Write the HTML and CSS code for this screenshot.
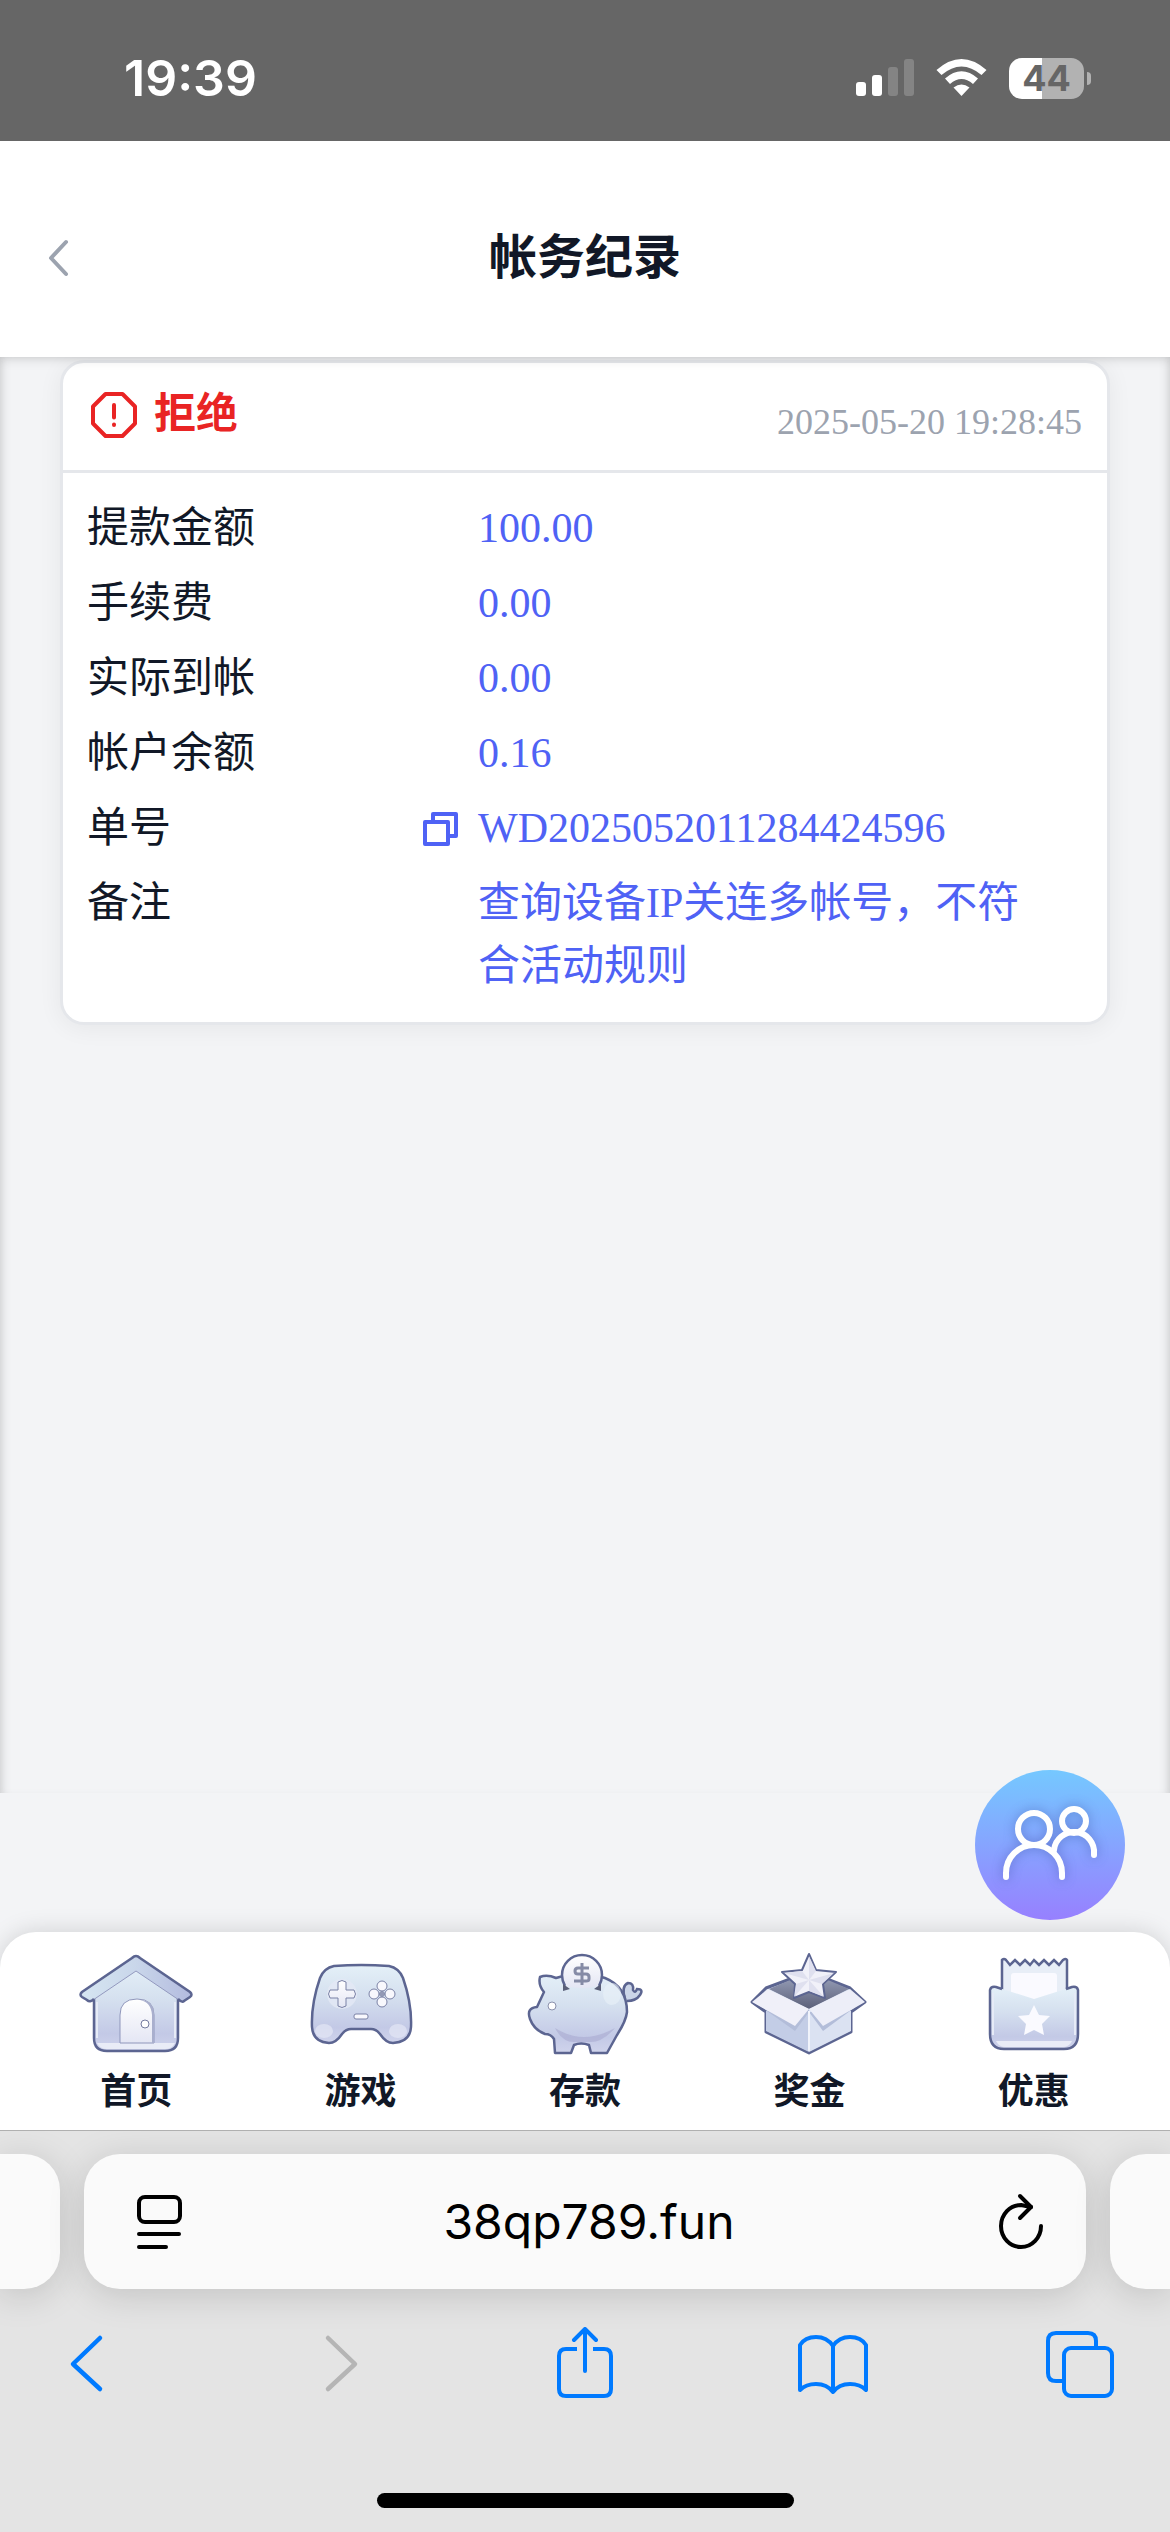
FILE: index.html
```
<!DOCTYPE html>
<html lang="zh-CN">
<head>
    <meta charset="UTF-8">
    <meta name="viewport" content="width=device-width, initial-scale=1.0">
    <title>帐务纪录</title>
    <link rel="stylesheet" href="styles.css">
</head>
<body>
    <!-- Status Bar -->
    <div class="status-bar">
        <span class="time">19:39</span>
        <div class="status-icons">
            <svg width="58" height="38" viewBox="0 0 58 38" fill="#fff">
                <rect x="0" y="23" width="10" height="14" rx="3"/>
                <rect x="16" y="16" width="10" height="21" rx="3"/>
                <rect x="32" y="8" width="10" height="29" rx="3" opacity=".2"/>
                <rect x="48" y="0" width="10" height="37" rx="3" opacity=".2"/>
            </svg>
            <svg width="51" height="38" viewBox="0 0 51 38" fill="#fff">
                <path d="M0.5 11 Q25.5 -11 50.500 11 L45.500 16 Q25.500 -1 5.500 16 Z"/>
                <path d="M9 19.500 Q25.500 5 42 19.500 L37 25 Q25.500 15 14 25 Z"/>
                <path d="M17.500 28.500 Q25.500 22.500 33.500 28.500 L25.500 37 Z"/>
            </svg>
            <div class="battery"><span class="battery-level">44</span></div>
        </div>
    </div>

    <!-- Page Header -->
    <header class="page-header">
        <button type="button" class="back-button" aria-label="返回">
            <svg width="24" height="38" viewBox="0 0 24 38" fill="none" stroke="#9ca3af" stroke-width="4" stroke-linecap="round" stroke-linejoin="round">
                <path d="M20 3 L5 19 L20 35"/>
            </svg>
        </button>
        <h1>帐务纪录</h1>
    </header>

    <!-- Record List -->
    <main class="records">
        <section class="card">
            <div class="card-header">
                <div class="status">
                    <svg width="48" height="48" viewBox="0 0 48 48" fill="none" stroke="#e92424" stroke-width="4" stroke-linejoin="round" stroke-linecap="round">
                        <path d="M15.500 3 H32.500 L45 15.500 V32.500 L32.500 45 H15.500 L3 32.500 V15.500 Z"/>
                        <path d="M24 14 V26.500 M24 33.500 V34"/>
                    </svg>
                    <h2>拒绝</h2>
                </div>
                <time datetime="2025-05-20T19:28:45">2025-05-20 19:28:45</time>
            </div>
            <dl class="details">
                <dt>提款金额</dt>
                <dd>100.00</dd>
                <dt>手续费</dt>
                <dd>0.00</dd>
                <dt>实际到帐</dt>
                <dd>0.00</dd>
                <dt>帐户余额</dt>
                <dd>0.16</dd>
                <dt>
                    单号
                    <button type="button" class="copy-button" aria-label="复制单号">
                        <svg width="36" height="36" viewBox="0 0 36 36" fill="none" stroke="#4f62f5" stroke-width="4" stroke-linejoin="round">
                            <rect x="3" y="11" width="23" height="22"/>
                            <path d="M11 11 V3 H34 V25 H26"/>
                        </svg>
                    </button>
                </dt>
                <dd>WD2025052011284424596</dd>
                <dt>备注</dt>
                <dd>查询设备IP关连多帐号，不符合活动规则</dd>
            </dl>
        </section>
    </main>

    <!-- Tab Bar -->
    <nav class="tab-bar">
        <button type="button" class="service-button" aria-label="客服">
            <svg width="150" height="150" viewBox="0 0 150 150" fill="none" stroke="#fff" stroke-width="6" stroke-linecap="round">
                <circle cx="59" cy="59" r="16"/>
                <path d="M31 107 V103 A28 28 0 0 1 87 103 V107"/>
                <circle cx="99" cy="51" r="12"/>
                <path d="M79 80 A20 20 0 0 1 119 84 V85"/>
            </svg>
        </button>
        <a class="tab" href="#">
            <svg width="120" height="108" viewBox="0 0 120 108">
                <defs>
                    <linearGradient id="fill" x1="0" y1="0" x2="0" y2="1">
                        <stop offset="0" stop-color="#e4f0f8"/>
                        <stop offset=".4" stop-color="#d5e0ef"/>
                        <stop offset=".8" stop-color="#c3c9e6"/>
                        <stop offset="1" stop-color="#d0d4ec"/>
                    </linearGradient>
                    <linearGradient id="roof" x1="0" y1="0" x2="1" y2="0">
                        <stop offset="0" stop-color="#d6e6f2"/>
                        <stop offset=".5" stop-color="#c9d6ea"/>
                        <stop offset="1" stop-color="#b3bbdf"/>
                    </linearGradient>
                    <linearGradient id="light" x1="0" y1="0" x2="0" y2="1">
                        <stop offset="0" stop-color="#ffffff"/>
                        <stop offset="1" stop-color="#e4e6f4"/>
                    </linearGradient>
                    <linearGradient id="inside" x1="0" y1="0" x2="0" y2="1">
                        <stop offset="0" stop-color="#9ea6c0"/>
                        <stop offset="1" stop-color="#5c6079"/>
                    </linearGradient>
                </defs>
                <path d="M18 42 V88 Q18 101 31 101 H89 Q102 101 102 88 V42 L60 15 Z" fill="url(#fill)" stroke="#5c6591" stroke-width="2.500"/>
                <path d="M21 88 V52 M99 88 V52" stroke="#e6ebf6" stroke-width="2"/>
                <path d="M21 93 H99 Q96 99 89 99 H31 Q24 99 21 93 Z" fill="#e9ecf7"/>
                <path d="M44 93 V65 Q44 49 61 49 Q78 49 78 65 V93 Z" fill="url(#light)" stroke="#8f96bb" stroke-width="1"/>
                <path d="M76 93 V65 Q75 52 64 50 Q78 50 78 65 V93 Z" fill="#a9afcd"/>
                <circle cx="69" cy="74" r="4" fill="#fff" stroke="#747b9f" stroke-width="1"/>
                <path d="M60 6 Q62 6 64 8 L114 42 Q117 45 114 47 L108 51 Q106 53 103 50 L60 21 L17 50 Q14 53 11 50 L6 47 Q3 45 6 42 L56 8 Q58 6 60 6 Z" fill="url(#roof)"/>
                <path d="M17 50 L60 21 L103 50" fill="none" stroke="#9399bf" stroke-width="1"/>
                <path d="M18 49 Q14 53 11 50 L6 47 Q3 45 6 42 L56 8 Q60 4 64 8 L114 42 Q117 45 114 47 L108 51 Q106 53 102 49" fill="none" stroke="#5c6591" stroke-width="2.500"/>
            </svg>
            <span>首页</span>
        </a>
        <a class="tab" href="#">
            <svg width="120" height="108" viewBox="0 0 120 108">
                <path d="M33 16 Q60 14 88 16 Q98 18 102 28 Q111 54 110 77 Q109 92 92 93 Q85 93 79 84 Q75 79 70 79 H50 Q45 79 41 84 Q35 93 28 93 Q12 92 11 77 Q10 54 19 28 Q23 18 33 16 Z" fill="url(#fill)" stroke="#5c6591" stroke-width="2.500"/>
                <ellipse cx="23" cy="81" rx="9" ry="7" fill="#e4e7f5" opacity=".7"/>
                <ellipse cx="97" cy="81" rx="9" ry="7" fill="#e4e7f5" opacity=".7"/>
                <circle cx="41" cy="44" r="15" fill="#e3e9f5" opacity=".8"/>
                <path d="M37 32 Q41 29 45 32 V40 H53 Q56 44 53 48 H45 V56 Q41 59 37 56 V48 H29 Q26 44 29 40 H37 Z" fill="url(#light)" stroke="#7b82a6" stroke-width="1"/>
                <path d="M77 44 L81 40 L85 44 L81 48 Z" fill="#9299b5"/>
                <g fill="#f8f8fd" stroke="#7b82a6" stroke-width="1">
                    <circle cx="81" cy="36" r="5"/>
                    <circle cx="73" cy="44" r="5"/>
                    <circle cx="89" cy="44" r="5"/>
                    <circle cx="81" cy="52" r="5"/>
                    <rect x="53" y="64" width="14" height="5" rx="2"/>
                </g>
            </svg>
            <span>游戏</span>
        </a>
        <a class="tab" href="#">
            <svg width="120" height="108" viewBox="0 0 120 108">
                <path d="M100 49 Q96 36 103 33 Q109 33 108 40 Q110 44 112 39 Q119 39 115 45 Q111 51 102 51" fill="#cbd5e8" stroke="#5c6591" stroke-width="2.500"/>
                <path d="M15 27 Q22 24 31 28 Q56 20 80 28 Q102 37 102 62 Q101 71 92 85 L82 103 H66 L64 95 Q56 92 49 95 L46 103 H30 L29 89 Q26 84 20 84 Q9 80 5 69 Q1 58 12 57 L19 42 Q13 35 15 27 Z" fill="url(#fill)" stroke="#5c6591" stroke-width="2.500" stroke-linejoin="round"/>
                <ellipse cx="87" cy="44" rx="9" ry="11" fill="#eaf1f9" opacity=".6"/>
                <path d="M30 78 Q58 96 90 78 Q77 93 64 92 H49 Q37 92 30 78 Z" fill="#a4a4cb" opacity=".5"/>
                <path d="M40 36 Q37 31 37 25 A20 20 0 0 1 77 25 Q77 31 74 36 Q57 40 40 36 Z" fill="url(#light)"/>
                <path d="M40 36 Q37 31 37 25 A20 20 0 0 1 77 25 Q77 31 74 36" fill="none" stroke="#5c6591" stroke-width="2.500"/>
                <path d="M38 34 L45 39 L38 41 Z M76 34 L69 39 L76 41 Z" fill="#5a5f78"/>
                <path d="M64 18 H53 Q50 18 50 21 Q50 24 53 24 H61 Q64 24 64 27 V29 Q64 31 61 31 H49 M57 13 V35" fill="none" stroke="#858ba6" stroke-width="3"/>
                <circle cx="27" cy="56" r="4" fill="#fff" stroke="#8b91ad" stroke-width="1"/>
            </svg>
            <span>存款</span>
        </a>
        <a class="tab" href="#">
            <svg width="120" height="108" viewBox="0 0 120 108">
                <path d="M3 52 L17 38 L60 22 L101 38 L116 52 L102 62 V82 L60 103 L17 82 V62 Z" fill="#cfd8ed" stroke="#5c6591" stroke-width="3" stroke-linejoin="round"/>
                <path d="M20 39 L60 22 L100 39 L60 59 Z" fill="url(#inside)"/>
                <path d="M17 61 L60 59 V102 L17 81 Z" fill="#c3cde6"/>
                <path d="M60 59 L102 61 V81 L60 102 Z" fill="#dbe2f2"/>
                <path d="M18 61 L46 81 L60 62 V59 Z M101 61 L74 81 L60 62 Z" fill="#b3bdd9"/>
                <path d="M60 61 V101" stroke="#f0f3fb" stroke-width="2"/>
                <path d="M19 39 L60 59 L46 76 L3 52 Z" fill="#f0f0f9"/>
                <path d="M101 39 L60 59 L74 76 L116 52 Z" fill="#edeef8"/>
                <path d="M60 4 L67 20 L87 22 L74 34 L76 48 L60 42 L45 48 L46 34 L33 22 L53 20 Z" fill="#f1f1f9" stroke="#5c6591" stroke-width="2" stroke-linejoin="round"/>
                <path d="M60 6 L67 21 L60 30 Z M85 23 L73 34 L60 30 Z M75 47 L60 41 V30 Z M45 47 L47 34 L60 30 Z M35 23 L53 21 L60 30 Z" fill="#dfe0ef"/>
            </svg>
            <span>奖金</span>
        </a>
        <a class="tab" href="#">
            <svg width="120" height="108" viewBox="0 0 120 108">
                <path d="M28 50 V10 Q30 8 32 10 L36 15 L41 10 L46 15 L51 10 L56 15 L60 10 L65 15 L70 10 L75 15 L80 10 L85 15 L89 10 Q92 8 93 10 V50 Z" fill="#e8eef7" stroke="#5c6591" stroke-width="2.500"/>
                <rect x="37" y="23" width="46" height="32" rx="3" fill="#fafaff"/>
                <path d="M16 40 Q17 36 22 37 L60 49 L98 37 Q103 36 104 40 V84 Q104 99 90 99 H30 Q16 99 16 84 Z" fill="url(#fill)"/>
                <path d="M28 39 L22 37 Q17 36 16 40 V84 Q16 99 30 99 H90 Q104 99 104 84 V40 Q103 36 98 37 L92 39" fill="none" stroke="#5c6591" stroke-width="2.500"/>
                <path d="M19 85 V43 M101 85 V43" stroke="#e6ebf7" stroke-width="2"/>
                <path d="M22 91 H98 Q95 97 89 97 H31 Q25 97 22 91 Z" fill="#e9ecf7"/>
                <path d="M60 55 L65 65 L76 66 L68 74 L70 85 L60 80 L50 85 L52 74 L44 66 L55 65 Z" fill="#fafaff"/>
            </svg>
            <span>优惠</span>
        </a>
    </nav>

    <!-- Browser Toolbar -->
    <footer class="browser-bar">
        <div class="address-row">
            <div class="side-page left"></div>
            <div class="address">
                <button type="button" aria-label="页面菜单">
                    <svg width="48" height="60" viewBox="0 0 48 60" fill="none" stroke="#000" stroke-width="4" stroke-linecap="round">
                        <rect x="5" y="5" width="41" height="25" rx="6"/>
                        <path d="M5 42 H45 M5 55 H32"/>
                    </svg>
                </button>
                <input type="text" value="38qp789.fun" aria-label="网址">
                <button type="button" aria-label="重新加载">
                    <svg width="48" height="60" viewBox="0 0 48 60" fill="none" stroke="#000" stroke-width="4" stroke-linecap="round" stroke-linejoin="round">
                        <path d="M45 34 A20 21 0 1 1 25 13 L35 15"/>
                        <path d="M24 4 L35 15 L24 26"/>
                    </svg>
                </button>
            </div>
            <div class="side-page right"></div>
        </div>
        <div class="toolbar">
            <button type="button" aria-label="后退">
                <svg width="72" height="72" viewBox="0 0 72 72" fill="none" stroke="#007aff" stroke-width="4.500" stroke-linecap="round" stroke-linejoin="round">
                    <path d="M46 11 L19 37 L46 62"/>
                </svg>
            </button>
            <button type="button" aria-label="前进" disabled>
                <svg width="72" height="72" viewBox="0 0 72 72" fill="none" stroke="#b5b5b5" stroke-width="4.500" stroke-linecap="round" stroke-linejoin="round">
                    <path d="M26 11 L53 37 L26 62"/>
                </svg>
            </button>
            <button type="button" aria-label="分享">
                <svg width="72" height="72" viewBox="0 0 72 72" fill="none" stroke="#007aff" stroke-width="4" stroke-linecap="round" stroke-linejoin="round">
                    <path d="M36 44 V2 M25 13 L36 2 L47 13"/>
                    <path d="M28 22 H17 Q10 22 10 29 V62 Q10 69 17 69 H55 Q62 69 62 62 V29 Q62 22 55 22 H44" stroke-linecap="butt"/>
                </svg>
            </button>
            <button type="button" aria-label="书签">
                <svg width="72" height="72" viewBox="0 0 72 72" fill="none" stroke="#007aff" stroke-width="4" stroke-linecap="round" stroke-linejoin="round">
                    <path d="M36 19 Q30 10 19 10 Q8 10 3 18 V63 Q9 57 19 57 Q30 57 36 65 Q42 57 53 57 Q63 57 69 63 V18 Q64 10 53 10 Q42 10 36 19 V64"/>
                </svg>
            </button>
            <button type="button" aria-label="标签页">
                <svg width="72" height="72" viewBox="0 0 72 72" fill="none" stroke="#007aff" stroke-width="4">
                    <rect x="20" y="21" width="48" height="48" rx="7"/>
                    <path d="M20 54 H12 Q4 54 4 46 V14 Q4 6 12 6 H44 Q52 6 52 14 V21"/>
                </svg>
            </button>
        </div>
        <div class="home-indicator"></div>
    </footer>
</body>
</html>
```

FILE: styles.css
```
/* General Styling */
* {
    box-sizing: border-box;
}

body {
    font-family: "Liberation Serif", "Noto Sans CJK SC", serif;
    background-color: #f3f4f6;
    color: #111827;
    margin: 0;
    min-height: 100vh;
    display: flex;
    flex-direction: column;
}

button {
    background: none;
    border: none;
    padding: 0;
    cursor: pointer;
}

svg {
    display: block;
}

/* Status Bar */
.status-bar {
    position: relative;
    z-index: 2;
    display: flex;
    justify-content: space-between;
    align-items: center;
    height: 141px;
    padding: 15px 78px 0 124px;
    background-color: #666666;
    color: #ffffff;
    font-family: Inter, sans-serif;
}

.time {
    font-size: 50px;
    font-weight: 600;
}

.status-icons {
    display: flex;
    align-items: center;
    gap: 22px;
}

.battery {
    position: relative;
    width: 75px;
    height: 41px;
    margin-right: 8px;
    border-radius: 13px;
    background: linear-gradient(to right, #ffffff 44%, #b2b2b2 44%);
    color: #666666;
    text-align: center;
}

/* Battery tip */
.battery::after {
    content: "";
    position: absolute;
    left: 78px;
    top: 14px;
    width: 4px;
    height: 13px;
    border-radius: 0 6px 6px 0;
    background-color: #b2b2b2;
}

.battery-level {
    font-size: 36px;
    font-weight: 700;
    line-height: 41px;
}

/* Page Header */
.page-header {
    position: relative;
    z-index: 1;
    display: grid;
    grid-template-columns: 1fr auto 1fr;
    align-items: center;
    height: 216px;
    padding: 18px 46px 0;
    background-color: #ffffff;
    box-shadow: 0 0 12px rgba(0, 0, 0, 0.2);
}

.page-header h1 {
    margin: 0;
    font-size: 48px;
    font-weight: 700;
    line-height: 72px;
}

.back-button {
    justify-self: start;
}

/* Record List */
.records {
    flex: 1;
    padding: 3px 60px 0;
    margin-bottom: 139px;
    box-shadow: inset 12px 0 12px -12px rgba(0, 0, 0, 0.2), inset -12px 0 12px -12px rgba(0, 0, 0, 0.2), inset 0 0 6px rgba(0, 0, 0, 0.03);
}

.card {
    border: 3px solid #e5e7eb;
    border-radius: 24px;
    background-color: #ffffff;
    box-shadow: 0 3px 24px rgba(0, 0, 0, 0.06);
}

.card-header {
    display: flex;
    justify-content: space-between;
    padding: 20px 25px 24px;
    border-bottom: 3px solid #e5e7eb;
}

.status {
    display: flex;
    align-items: center;
    gap: 16px;
    height: 63px;
    padding-left: 2px;
    color: #e92424;
}

.status h2 {
    margin: 0;
    font-size: 42px;
    font-weight: 700;
    line-height: 63px;
}

.card-header time {
    align-self: flex-end;
    color: #9ca3af;
    font-size: 36px;
    line-height: 48px;
}

/* Record Details */
.details {
    display: grid;
    grid-template-columns: 371px 1fr;
    gap: 12px 20px;
    margin: 0;
    padding: 24px 60px 24px 24px;
    font-size: 42px;
    line-height: 63px;
}

.details dt {
    display: flex;
    justify-content: space-between;
    align-items: center;
    height: 63px;
}

.details dd {
    margin: 0;
    color: #4f62f5;
}

/* Tab Bar */
.tab-bar {
    position: relative;
    display: flex;
    height: 198px;
    padding: 18px 24px 0;
    border-radius: 36px 36px 0 0;
    background-color: #ffffff;
    box-shadow: 0 0 24px rgba(0, 0, 0, 0.15);
}

.tab {
    flex: 1;
    display: flex;
    flex-direction: column;
    align-items: center;
    gap: 7px;
    color: #111827;
    font-size: 36px;
    font-weight: 700;
    line-height: 54px;
    text-decoration: none;
}

/* Floating service button */
.service-button {
    position: absolute;
    right: 45px;
    bottom: calc(100% + 12px);
    border-radius: 50%;
    background: linear-gradient(#75c8ff, #9780ff);
}

.service-button svg {
    filter: drop-shadow(0 0 6px rgba(40, 60, 140, 0.4));
}

/* Browser Toolbar */
.browser-bar {
    position: relative;
    height: 402px;
    border-top: 1px solid #b0b0b0;
    background-color: #e4e4e4;
    overflow: hidden;
}

.address-row {
    display: flex;
    gap: 24px;
    padding-top: 23px;
}

.side-page,
.address {
    height: 135px;
    background-color: #fafafa;
    box-shadow: 0 6px 36px rgba(0, 0, 0, 0.15);
}

.side-page {
    width: 60px;
}

.side-page.left {
    border-radius: 0 36px 36px 0;
}

.side-page.right {
    border-radius: 36px 0 0 36px;
}

.address {
    flex: 1;
    display: flex;
    justify-content: space-between;
    align-items: center;
    padding: 0 42px 0 50px;
    border-radius: 36px;
}

.address input {
    flex: 1;
    min-width: 0;
    border: none;
    outline: none;
    background: none;
    color: #000000;
    font-family: Inter, sans-serif;
    font-size: 48px;
    text-align: center;
}

.toolbar {
    display: flex;
    justify-content: space-between;
    padding: 38px 54px 0;
}

.home-indicator {
    width: 417px;
    height: 15px;
    margin: 94px auto 0;
    border-radius: 8px;
    background-color: #000000;
}
```
